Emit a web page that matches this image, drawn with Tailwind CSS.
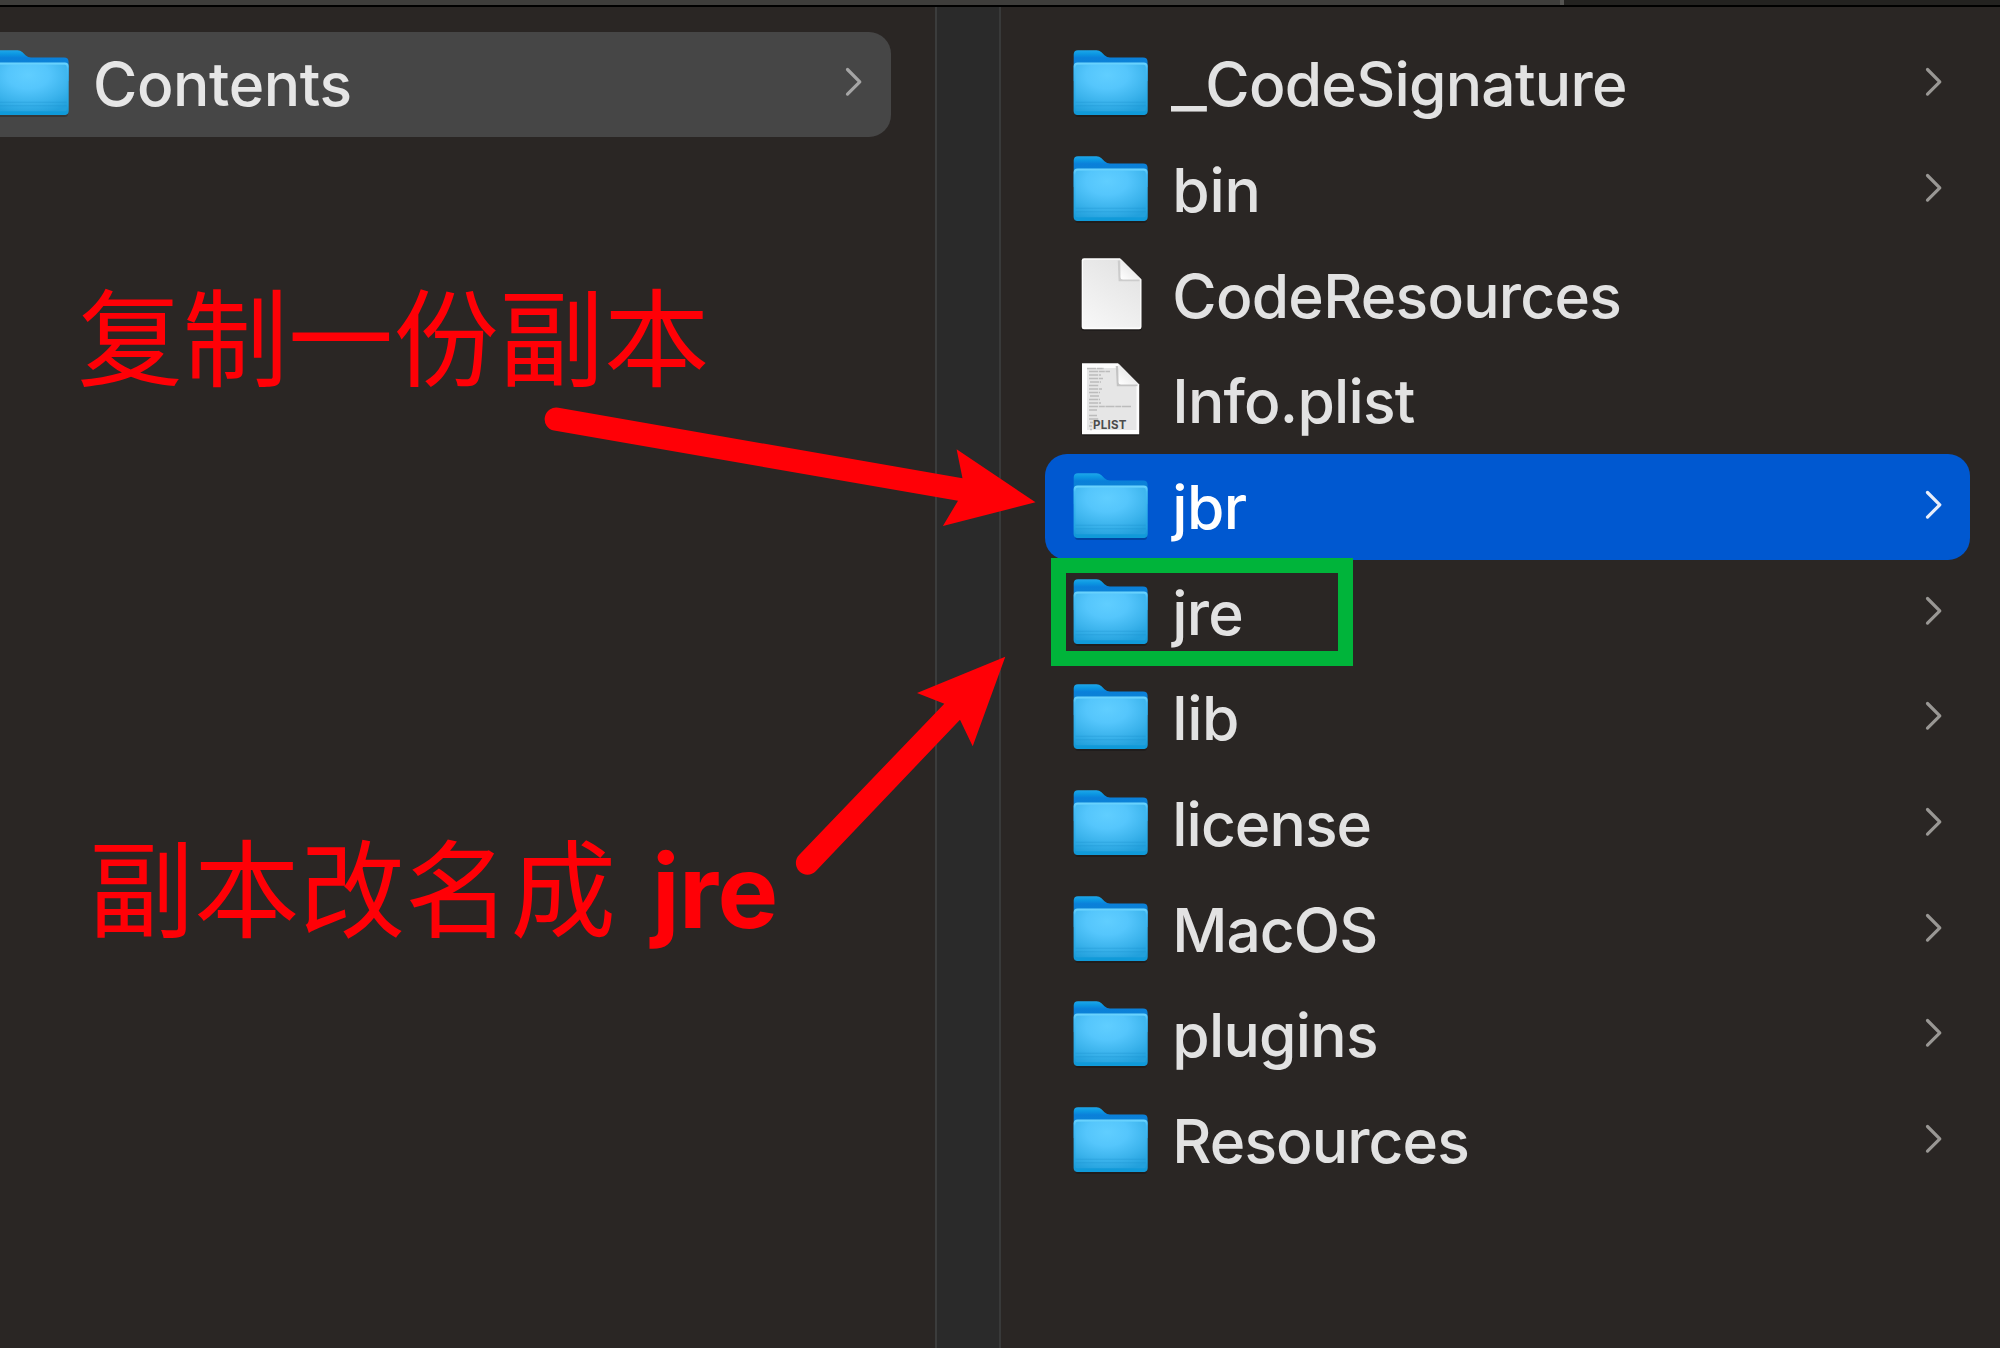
<!DOCTYPE html>
<html lang="zh-CN">
<head>
<meta charset="utf-8">
<title>Contents</title>
<script src="https://cdn.jsdelivr.net/npm/@tailwindcss/browser@4"></script>
</head>
<body class="relative flex h-[1348px] w-[2000px] flex-col overflow-hidden bg-[#2a2624] font-['Inter',sans-serif]">

<!-- Shared icons -->
<svg class="absolute h-0 w-0" aria-hidden="true">
  <defs>
    <linearGradient id="back" x1="0" y1="0" x2="0" y2="1">
      <stop offset="0" stop-color="#1fa7ea"/><stop offset=".12" stop-color="#0c98e2"/><stop offset=".25" stop-color="#0a80da"/><stop offset="1" stop-color="#0f86c8"/>
    </linearGradient>
    <linearGradient id="edge" x1="0" y1="0" x2="0" y2="1">
      <stop offset="0" stop-color="#6fd6ff"/><stop offset=".12" stop-color="#45bdf6"/><stop offset=".8" stop-color="#22a5e2"/><stop offset="1" stop-color="#1294d2"/>
    </linearGradient>
    <radialGradient id="front" cx=".45" cy=".22" r=".85">
      <stop offset="0" stop-color="#60ceff"/><stop offset=".35" stop-color="#55c6fc"/><stop offset=".7" stop-color="#3bb3ec"/><stop offset="1" stop-color="#22a0dc"/>
    </radialGradient>
    <linearGradient id="page" x1="0" y1="1" x2=".6" y2="0">
      <stop offset="0" stop-color="#f8f8f8"/><stop offset="1" stop-color="#e4e4e4"/>
    </linearGradient>
    <linearGradient id="fold" x1="0" y1="1" x2=".6" y2=".3">
      <stop offset="0" stop-color="#ffffff"/><stop offset="1" stop-color="#e6e6e6"/>
    </linearGradient>
  </defs>
  <symbol id="folder" viewBox="0 0 80 106">
    <rect x="5" y="80" width="72" height="6" rx="3" fill="#000" opacity=".22"/>
    <path d="M3.700 28V23.500Q3.700 19.200 8 19.200H26.500Q29.300 19.200 31.500 21.200L34.500 24.200Q37 26.600 40 26.600H73Q77.600 26.600 77.600 31V50H3.700Z" fill="url(#back)"/>
    <path d="M3.600 35.500Q3.600 31.500 7.600 31.500H73.700Q77.700 31.500 77.700 35.500V79.700Q77.700 83.900 73.500 83.900H7.800Q3.600 83.900 3.600 79.700Z" fill="url(#edge)"/>
    <path d="M5.500 36Q5.500 33.800 7.700 33.800H73.600Q75.800 33.800 75.800 36V77Q75.800 80.500 73 80.500H8.300Q5.500 80.500 5.500 77Z" fill="url(#front)"/>
    <path d="M5.500 70.800H75.800V71.800H5.500ZM5.500 74.300H75.800V75.300H5.500Z" fill="#1c93cf" opacity=".35"/>
    <path d="M5 80.500H76.300Q75.500 83.900 73.500 83.900H7.800Q5.800 83.900 5 80.500Z" fill="#109ad9"/>
  </symbol>
  <symbol id="file" viewBox="0 0 80 106">
    <rect x="11" y="82" width="61" height="6" rx="3" fill="#000" opacity=".25"/>
    <path d="M14 15.300H50L71.500 36.500V84Q71.500 86.300 69.200 86.300H14Q11.700 86.300 11.700 84V17.600Q11.700 15.300 14 15.300Z" fill="#fdfdfd"/>
    <path d="M14.500 16.800H50L70.200 37V83Q70.200 84.600 68.600 84.600H14.500Q13 84.600 13 83V18.300Q13 16.800 14.500 16.800Z" fill="url(#page)"/>
    <path d="M49 17.500L49.800 37H69.500" fill="none" stroke="#cccccc" stroke-width="2.500"/>
    <path d="M50.500 15.800L71.300 36.500H53Q50.500 36.500 50.500 34Z" fill="url(#fold)"/>
  </symbol>
  <symbol id="plist" viewBox="0 0 80 106">
    <rect x="11" y="82" width="59" height="6" rx="3" fill="#000" opacity=".25"/>
    <path d="M12 15.300H48L69.200 36.500V86.300H12Z" fill="#fdfdfd"/>
    <path d="M17 20H48L66.500 39V82H17Z" fill="#e6e6e6"/>
    <path d="M17 20.500H34M19 23.500H40M19 27H31M19 30.500H33M20 34H31M19 37.500H29M19 41H32M19 44.500H30M20 48H29M19 51.500H30M19 55H31M19 58.500H61M19 62H27M19 67.500H27M19 71H29M20 74.500H23M19 78H22M20 81.500H22" fill="none" stroke="#a9a9a9" stroke-width="1.700" stroke-dasharray="9 .8 6 .7" opacity=".7"/>
    <path d="M47 18L48 37H67.500" fill="none" stroke="#c4c4c4" stroke-width="2.500"/>
    <path d="M48.500 15.800L69 36.500H51Q48.500 36.500 48.500 34Z" fill="url(#fold)"/>
    <text x="23" y="80.500" textLength="33.500" font-family="Inter, sans-serif" font-size="11.500" font-weight="700" fill="#4c4c4c">PLIST</text>
  </symbol>
  <symbol id="chevron" viewBox="0 0 18 32">
    <path d="M2.500 3.500L14.800 15.800L2.500 28.100" fill="none" stroke="currentColor" stroke-width="3.200" stroke-linecap="round" stroke-linejoin="round"/>
  </symbol>
</svg>

<!-- Bottom edge of the window toolbar -->
<div class="flex h-[7px] shrink-0 border-b-2 border-black bg-[#232220]">
  <div class="w-[1564px] border-r-4 border-[#555452] bg-[#3e3d3b]"></div>
</div>

<main class="flex min-h-0 flex-1">
  <!-- Parent column -->
  <section class="w-[935px] pt-[24.500px]">
    <div class="flex h-[105.670px] w-[890.500px] items-center rounded-r-[22px] bg-[#464646] pr-7 text-[60.500px] leading-[72px] font-medium text-[#e6e6e6]">
      <svg class="-ml-[9.500px] h-[106px] w-20 shrink-0"><use href="#folder"/></svg>
      <span class="ml-[22.500px] flex-1 tracking-[-0.400px]">Contents</span>
      <svg class="-mt-[4px] h-8 w-[18px] text-[#a5a5a5]"><use href="#chevron"/></svg>
    </div>
  </section>

  <!-- Column divider -->
  <div class="w-[66px] border-x-2 border-l-[#3b3c3c] border-r-[#383939] bg-[#2a2a2a]"></div>

  <!-- Child column -->
  <section id="list" class="flex flex-1 flex-col pt-[24.500px] pr-[30.300px] pl-[43.500px] text-[60.500px] leading-[72px] font-medium text-[#e2e2e2]"></section>
</main>

<template id="row">
  <div class="flex h-[105.670px] shrink-0 items-center pr-[27px] pl-[25.500px]">
    <svg class="h-[106px] w-20 shrink-0"><use/></svg>
    <span class="ml-[22.300px] flex-1 whitespace-nowrap"></span>
    <svg class="-mt-[4px] h-8 w-[18px] text-[#999794]"><use href="#chevron"/></svg>
  </div>
</template>

<!-- Green frame around the jre folder -->
<div class="absolute top-[557.500px] left-[1051px] h-[108.300px] w-[302px] border-[15.400px] border-[#00b43a]"></div>

<!-- Notes and arrows -->
<p class="absolute top-[278.500px] left-[77.500px] text-[105.300px] leading-[106px] whitespace-nowrap text-[#ff0006] font-['Noto_Sans_CJK_SC',sans-serif]">复制一份副本</p>
<p class="absolute top-[829.500px] left-[88.400px] flex items-baseline gap-9 text-[105.500px] leading-[106px] whitespace-nowrap text-[#ff0006] font-['Noto_Sans_CJK_SC',sans-serif]">
  <span>副本改名成</span><span class="relative -top-px text-[102px] font-bold tracking-[-0.500px] font-['Inter',sans-serif]">jre</span>
</p>
<svg class="absolute inset-0 h-full w-full" viewBox="0 0 2000 1348" fill="#ff0006">
  <path d="M962.500 478.300L956.600 449.300L1035.500 502.300L942.900 526L958 500.700L554 430.600A11.600 11.600 0 0 1 558.500 407.800Z"/>
  <path d="M944.300 703.700L917 693L1005.300 656.700L972.700 746.300L960 719.700L815.700 871.300A11.600 11.600 0 0 1 799.300 854.800Z"/>
</svg>

<script>
  const rows = [
    ['CodeSignature', 'folder', -0.75],
    ['bin', 'folder', -0.2],
    ['CodeResources', 'file', -0.75],
    ['Info.plist', 'plist', -0.8],
    ['jbr', 'folder', -0.6],
    ['jre', 'folder', -0.75],
    ['lib', 'folder', -0.4],
    ['license', 'folder', -0.95],
    ['MacOS', 'folder', -1],
    ['plugins', 'folder', -0.75],
    ['Resources', 'folder', -0.9],
  ];
  const list = document.getElementById('list');
  for (const [name, icon, spacing] of rows) {
    const row = document.getElementById('row').content.firstElementChild.cloneNode(true);
    const label = row.querySelector('span');
    label.textContent = name;
    label.style.letterSpacing = spacing + 'px';
    if (name === 'CodeSignature') {
      const underscore = document.createElement('span');
      underscore.className = 'inline-block w-[34px] origin-left scale-x-[1.28] -ml-px';
      underscore.textContent = '_';
      label.prepend(underscore);
    }
    row.querySelector('use').setAttribute('href', '#' + icon);
    if (icon !== 'folder') row.lastElementChild.remove();
    if (name === 'jbr') {
      row.classList.add('rounded-[22px]', 'bg-[#0058d0]', 'text-white');
      row.lastElementChild.classList.replace('text-[#999794]', 'text-[#e8eefa]');
    }
    list.append(row);
  }
</script>
</body>
</html>
